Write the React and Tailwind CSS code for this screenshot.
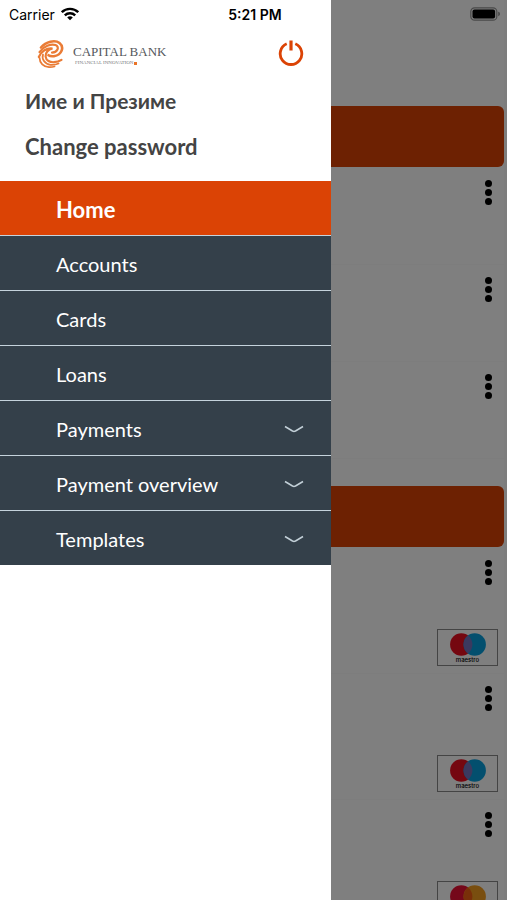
import React from "react";

const menu = [
  { label: "Home", active: true },
  { label: "Accounts" },
  { label: "Cards" },
  { label: "Loans" },
  { label: "Payments", expandable: true },
  { label: "Payment overview", expandable: true },
  { label: "Templates", expandable: true },
];

function WifiIcon() {
  return (
    <svg viewBox="0 0 18 14" className="h-[14px] w-[18px]" fill="none" stroke="#000" strokeWidth="2.4" aria-hidden="true">
      <path d="M0.8 5.2 C5.3 0.7 12.7 0.7 17.2 5.2" />
      <path d="M3.8 8.3 C6.7 5.5 11.3 5.5 14.2 8.3" />
      <path d="M9 13.2 L6.2 10.4 C7.7 8.9 10.3 8.9 11.8 10.4 Z" fill="#000" stroke="none" />
    </svg>
  );
}

function BatteryIcon() {
  return (
    <svg viewBox="0 0 31 14" className="h-[14px] w-[31px]" aria-hidden="true">
      <rect x="0.8" y="0.8" width="26" height="12.4" rx="3.8" fill="none" stroke="#4a4a4a" strokeWidth="1.2" />
      <rect x="2.5" y="2.5" width="22.6" height="9" rx="2" fill="#000" />
      <path d="M28.2 4.8 C30.6 5.4 30.6 8.6 28.2 9.2 Z" fill="#4a4a4a" />
    </svg>
  );
}

function BankMark() {
  return (
    <svg viewBox="0 0 28 30" className="h-[30px] w-[28px]" fill="none" stroke="#ea7c36" strokeLinecap="round" aria-hidden="true">
      <path d="M4 8.500 C9 2.500 18 0.500 22.500 4 C27.500 8 25 16 17 17.200 C14.500 17.500 12.500 17 11.500 16.200" strokeWidth="2.600" />
      <path d="M2.500 13 C6.500 7 14 4.500 18.500 6 C23 8 20.500 13.500 15 13.600" strokeWidth="2.200" />
      <path d="M1.800 18 C4 12 10 8.800 15.500 9.500 C11 10.500 8.300 14 8.600 17.500 C9 21.500 13 23.500 17 23.200 C20 23 23 21.800 24.500 20.800" strokeWidth="2.200" />
      <path d="M6 15.500 C4.500 20 7.500 25 13.500 25.800 C16.500 26 19.500 25.500 21.500 24.500" strokeWidth="1.800" />
      <path d="M2.600 19 C2.600 24 6.500 27.800 12 28.200 C14 28.300 16 28 17.500 27.500" strokeWidth="1.800" />
    </svg>
  );
}

function PowerIcon() {
  return (
    <svg viewBox="0 0 26 28" className="h-[28px] w-[26px]" fill="none" stroke="#db4305" strokeWidth="2.800" aria-hidden="true">
      <path d="M8.700 4.800 A10.800 10.800 0 1 0 17.300 4.800" />
      <path d="M13 1.500 V11.500" strokeWidth="3.200" />
    </svg>
  );
}

function Chevron() {
  return (
    <svg viewBox="0 0 20 8" className="h-2 w-5" fill="none" stroke="#c3d0d8" strokeWidth="1.500" aria-hidden="true">
      <path d="M1 1.500 L8.500 6 Q10 6.800 11.500 6 L19 1.500" />
    </svg>
  );
}

function MoreButton() {
  return (
    <button type="button" aria-label="More options" className="flex w-[7px] flex-col gap-[2px]">
      <span className="size-[7px] rounded-full bg-black" />
      <span className="size-[7px] rounded-full bg-black" />
      <span className="size-[7px] rounded-full bg-black" />
    </button>
  );
}

function CardLogo({ brand }) {
  const maestro = brand === "maestro";
  return (
    <div className="flex h-[37px] w-[61px] flex-col items-center border border-[#888] pt-[3px]">
      <svg viewBox="0 0 36 23" className="h-[23px] w-9 shrink-0" aria-hidden="true">
        <circle cx="11.300" cy="11.500" r="11.200" fill={maestro ? "#ea0f20" : "#eb1134"} />
        <circle cx="24.700" cy="11.500" r="11.200" fill={maestro ? "#079fdd" : "#f29d1f"} />
        <path d="M18 2.600 A11.200 11.200 0 0 1 18 20.400 A11.200 11.200 0 0 1 18 2.600 Z" fill={maestro ? "#7673be" : "#f35e12"} />
      </svg>
      {maestro && (
        <span className="font-['Inter',sans-serif] text-[6px] leading-[7px] font-medium text-black">maestro</span>
      )}
    </div>
  );
}

function AccountRow() {
  return (
    <li className="flex h-[97px] justify-end border-b border-[#fbfbfb] pt-3 pr-3">
      <MoreButton />
    </li>
  );
}

function CardRow({ brand }) {
  return (
    <li className="flex h-[126px] flex-col items-end justify-between border-b border-[#fbfbfb] pt-3 pb-[7px]">
      <div className="pr-3">
        <MoreButton />
      </div>
      <div className="pr-[6px]">
        <CardLogo brand={brand} />
      </div>
    </li>
  );
}

function Dashboard() {
  return (
    <main className="bg-[#fafafa] pr-[3px]" aria-hidden="true">
      <section className="bg-white pt-[106px]">
        <div className="h-[61px] rounded-md bg-[#db4305]" />
        <ul className="pt-px">
          <AccountRow />
          <AccountRow />
          <AccountRow />
        </ul>
      </section>
      <section className="bg-white pt-[27px]">
        <div className="h-[61px] rounded-md bg-[#db4305]" />
        <ul className="pt-px">
          <CardRow brand="maestro" />
          <CardRow brand="maestro" />
          <CardRow brand="mastercard" />
        </ul>
      </section>
    </main>
  );
}

function Drawer() {
  return (
    <aside className="absolute inset-y-0 left-0 w-[331px] max-w-full bg-white">
      <header className="flex items-start justify-between pt-[39px] pr-[27px] pl-[37px]">
        <div className="flex items-center">
          <BankMark />
          <div className="pt-1 pl-2">
            <div className="font-['Liberation_Serif',serif] text-[13px] leading-[14px] whitespace-nowrap text-[#55585c]">CAPITAL BANK</div>
            <div className="flex items-center gap-px pl-[2px]">
              <span className="font-['Liberation_Serif',serif] text-[5px] leading-[8px] whitespace-nowrap text-[#77797c]">FINANCIAL INNOVATION</span>
              <span className="size-[3px] bg-[#ea7428]" />
            </div>
          </div>
        </div>
        <button type="button" aria-label="Log out">
          <PowerIcon />
        </button>
      </header>
      <div className="flex flex-col items-start gap-[22px] pt-5 pb-[22px] pl-[25px] text-[22px] leading-6 font-bold text-[#444]">
        <p className="text-[21px]">Име и Презиме</p>
        <a href="#password">Change password</a>
      </div>
      <nav>
        <ul>
          {menu.map((item) => (
            <li key={item.label} className="border-b border-[#c5d3dc] last:border-b-0">
              {item.expandable ? (
                <button
                  type="button"
                  aria-expanded="false"
                  className="flex h-[54px] w-full items-center justify-between bg-[#34404a] pt-[2px] pr-[27px] pl-14 text-[20px] text-white"
                >
                  <span>{item.label}</span>
                  <Chevron />
                </button>
              ) : (
                <a
                  href={"#" + item.label.toLowerCase()}
                  className={
                    item.active
                      ? "flex h-[54px] items-center bg-[#db4305] pt-[2px] pl-14 text-[22px] font-bold text-white"
                      : "flex h-[54px] items-center bg-[#34404a] pt-[2px] pl-14 text-[20px] text-white"
                  }
                >
                  {item.label}
                </a>
              )}
            </li>
          ))}
        </ul>
      </nav>
    </aside>
  );
}

function StatusBar() {
  return (
    <div className="absolute inset-x-0 top-0 grid h-7 grid-cols-3 items-center pr-[6px] pl-[9px] font-['Inter',sans-serif] text-[14px] text-black">
      <div className="flex items-center gap-[6px]">
        <span>Carrier</span>
        <WifiIcon />
      </div>
      <span className="text-center font-semibold">5:21 PM</span>
      <div className="flex justify-end">
        <BatteryIcon />
      </div>
    </div>
  );
}

export default function App() {
  return (
    <div className="relative h-screen overflow-hidden bg-white font-['Lato','Open_Sans',sans-serif]">
      <Dashboard />
      <div className="absolute inset-0 bg-black/50" />
      <Drawer />
      <StatusBar />
    </div>
  );
}
